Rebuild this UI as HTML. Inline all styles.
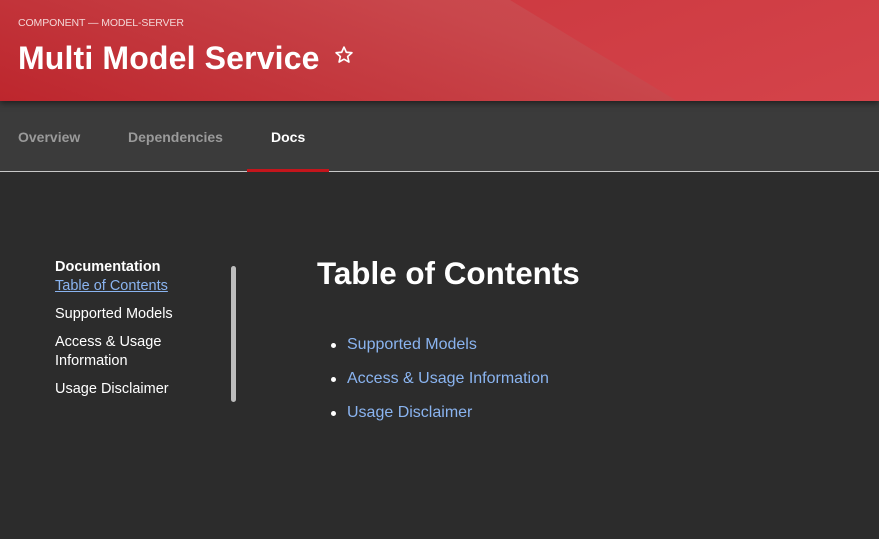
<!DOCTYPE html>
<html><head><style>
*{margin:0;padding:0;box-sizing:border-box}
body{width:879px;height:539px;background:#2c2c2c;font-family:"Liberation Sans",sans-serif;overflow:hidden;position:relative}
.hdr{position:absolute;left:0;top:0;width:879px;height:101px;background:linear-gradient(20deg,#bd262d 0%,#c9474c 60%,#cd5155 100%);overflow:hidden;box-shadow:0 2px 6px rgba(0,0,0,.5);z-index:2}
.hdr .r{position:absolute;left:0;top:0;width:879px;height:101px;background:linear-gradient(160deg,#c8343b,#d4434a);clip-path:polygon(510px 0,879px 0,879px 101px,677px 101px)}
.kick{position:absolute;left:18px;top:17px;color:#f3d6d6;font-size:10.5px;letter-spacing:-.1px}
.title{position:absolute;left:18px;top:40px;color:#fff;font-size:32px;font-weight:bold;letter-spacing:.15px;white-space:nowrap}
.tabs{position:absolute;left:0;top:101px;width:879px;height:71px;background:#3b3b3b;border-bottom:1px solid #c8c8c8}
.tab{position:absolute;top:28px;font-size:14px;font-weight:bold;color:#9a9a9a}
.ul{position:absolute;left:247px;top:68px;width:82px;height:3px;background:#c4151c}
.side{position:absolute;left:55px;top:258px;font-size:14.5px;color:#fff;line-height:19px}
.side div{margin-bottom:9px}
.side a{color:#8ab4f0;text-decoration:underline}
.bar{position:absolute;left:231px;top:266px;width:5px;height:136px;border-radius:3px;background:#bdbdbd}
h1{position:absolute;left:317px;top:256px;color:#fff;font-size:31.4px;font-weight:bold}
ul.l{position:absolute;left:347px;top:336px;list-style:none;font-size:16px;color:#8ab4f0}
ul.l li{height:34px;position:relative}
ul.l li:before{content:"";position:absolute;left:-16px;top:7px;width:5px;height:5px;border-radius:50%;background:#fff}
</style></head><body>
<div class="hdr"><div class="r"></div>
<div class="kick">COMPONENT — MODEL-SERVER</div>
<div class="title">Multi Model Service<svg width="20" height="20" viewBox="0 0 24 24" style="vertical-align:4px;margin-left:14px"><path d="M12 2.5l2.8 6.2 6.7.6-5.1 4.5 1.5 6.6L12 17l-5.9 3.4 1.5-6.6-5.1-4.5 6.7-.6z" fill="none" stroke="#fff" stroke-width="2" stroke-linejoin="round"/></svg></div>
</div>
<div class="tabs">
<div class="tab" style="left:18px">Overview</div>
<div class="tab" style="left:128px">Dependencies</div>
<div class="tab" style="left:271px;color:#fff">Docs</div>
<div class="ul"></div>
</div>
<div class="side">
<div style="margin-bottom:0;font-weight:bold">Documentation</div>
<div><a>Table of Contents</a></div>
<div>Supported Models</div>
<div>Access &amp; Usage<br>Information</div>
<div>Usage Disclaimer</div>
</div>
<div class="bar"></div>
<h1>Table of Contents</h1>
<ul class="l"><li>Supported Models</li><li>Access &amp; Usage Information</li><li>Usage Disclaimer</li></ul>
</body></html>
